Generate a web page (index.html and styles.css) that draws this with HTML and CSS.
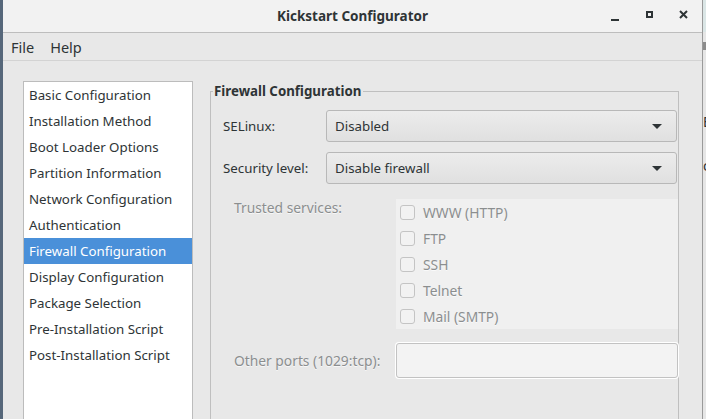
FILE: index.html
```html
<!DOCTYPE html>
<html lang="en">
<head>
<meta charset="utf-8">
<title>Kickstart Configurator</title>
<link rel="stylesheet" href="styles.css">
</head>
<body>
<div class="screen">
  <div class="edge-left"></div>
  <div class="window">
    <div class="titlebar">
      <span class="title">Kickstart Configurator</span>
      <div class="controls">
        <span class="ctl min"></span>
        <span class="ctl max"></span>
        <svg class="ctl close" width="9" height="9" viewBox="0 0 9 9"><path d="M1 1 L8 8 M8 1 L1 8" stroke="#2e3436" stroke-width="2"/></svg>
      </div>
    </div>
    <div class="menubar">
      <span class="menu">File</span>
      <span class="menu">Help</span>
    </div>
    <div class="content">
      <ul class="sidebar">
        <li>Basic Configuration</li>
        <li>Installation Method</li>
        <li>Boot Loader Options</li>
        <li>Partition Information</li>
        <li>Network Configuration</li>
        <li>Authentication</li>
        <li class="selected">Firewall Configuration</li>
        <li>Display Configuration</li>
        <li>Package Selection</li>
        <li>Pre-Installation Script</li>
        <li>Post-Installation Script</li>
      </ul>
      <fieldset class="frame">
        <legend>Firewall Configuration</legend>
        <div class="row">
          <label class="lbl">SELinux:</label>
          <div class="combo"><span>Disabled</span><i class="arrow"></i></div>
        </div>
        <div class="row">
          <label class="lbl">Security level:</label>
          <div class="combo"><span>Disable firewall</span><i class="arrow"></i></div>
        </div>
        <div class="row services">
          <label class="lbl off">Trusted services:</label>
          <div class="checks">
            <div class="check"><span class="box"></span>WWW (HTTP)</div>
            <div class="check"><span class="box"></span>FTP</div>
            <div class="check"><span class="box"></span>SSH</div>
            <div class="check"><span class="box"></span>Telnet</div>
            <div class="check"><span class="box"></span>Mail (SMTP)</div>
          </div>
        </div>
        <div class="row ports">
          <label class="lbl off">Other ports (1029:tcp):</label>
          <div class="entry"></div>
        </div>
      </fieldset>
    </div>
  </div>
  <div class="edge-right">
    <div class="peek-top"></div>
    <div class="peek-bar"></div>
    <div class="peek-body"><span>E</span><span>c</span></div>
  </div>
</div>
</body>
</html>
```

FILE: styles.css
```css
body{margin:0;background:#4f5d6b;font-family:"Noto Sans","Open Sans",sans-serif;font-size:13.3px;color:#2e3436;}
.screen{display:flex;width:706px;height:419px;overflow:hidden;}
.edge-left{width:3px;background:#56677a;}
.window{width:700px;display:flex;flex-direction:column;background:#e8e8e8;}
.edge-right{width:3px;background:#e6e6e6;border-left:1px solid #9a9a9a;display:flex;flex-direction:column;overflow:hidden;font-size:14px;}
.peek-top{height:32px;background:#dbe6e6;}
.peek-bar{height:8px;margin-top:10px;background:#8c8c8c;}
.peek-body{display:flex;flex-direction:column;gap:25px;margin-top:62px;color:#2e3436;}

.titlebar{height:32px;flex:none;background:#f2f2f2;border-bottom:1px solid #bdbdbd;display:flex;align-items:center;justify-content:center;position:relative;}
.title{font-weight:bold;font-size:13.5px;color:#2e3436;}
.controls{position:absolute;right:14px;top:0;height:32px;display:flex;align-items:center;}
.ctl{display:block;}
.min{width:8px;height:2px;background:#2e3436;margin-top:7px;}
.max{width:3px;height:3px;border:2px solid #2e3436;margin-left:27px;margin-top:-4px;}
.close{margin-left:26px;margin-top:-4px;}

.menubar{height:27px;flex:none;border-bottom:1px solid #d3d3d3;display:flex;align-items:center;padding-left:8px;gap:16px;font-size:14.5px;}

.content{flex:1;display:flex;align-items:flex-start;padding:20px 0 0 20px;gap:17px;}
.sidebar{list-style:none;margin:0;padding:0;width:168px;height:400px;background:#fff;border:1px solid #bcbcbc;}
.sidebar li{height:26px;line-height:26px;padding-left:5px;white-space:nowrap;}
.sidebar li.selected{background:#4a90d9;color:#fff;}

.frame{margin:1px 0 0 0;padding:10px 0 0 12px;width:455px;height:400px;border:1px solid #bfbfbf;}
.frame legend{font-weight:bold;padding:0 2px 0 1px;margin-left:-10px;}
.row{display:flex;align-items:center;margin-bottom:10px;}
.lbl{width:103px;}
.off{color:#8b8e8f;padding-left:11px;width:162px;font-size:13.8px;text-shadow:0 1px rgba(255,255,255,.7);}
.combo{flex:none;width:351px;height:32px;border:1px solid #b8b8b8;border-radius:3px;background:linear-gradient(#ececec,#e0e0e0);display:flex;align-items:center;justify-content:space-between;padding:0 14px 0 8px;box-sizing:border-box;}
.arrow{width:0;height:0;border-left:5px solid transparent;border-right:5px solid transparent;border-top:5px solid #2e3436;}
.services{align-items:flex-start;margin-top:15px;}
.services .lbl{padding-top:1px;line-height:16px;}
.checks{width:282px;background:#f0f0f0;padding:0 0 0 4px;box-sizing:border-box;}
.check{height:26px;display:flex;align-items:center;color:#8b8e8f;font-size:13.8px;text-shadow:0 1px rgba(255,255,255,.7);}
.box{width:13px;height:13px;border:1px solid #c4c4c4;border-radius:3px;background:#f2f2f2;margin-right:8px;}
.ports{margin-top:14px;}
.entry{width:282px;height:35px;box-sizing:border-box;border:1px solid #c2c2c2;border-radius:3px;background:#f3f3f3;box-shadow:0 0 0 1px #fff;}
```
